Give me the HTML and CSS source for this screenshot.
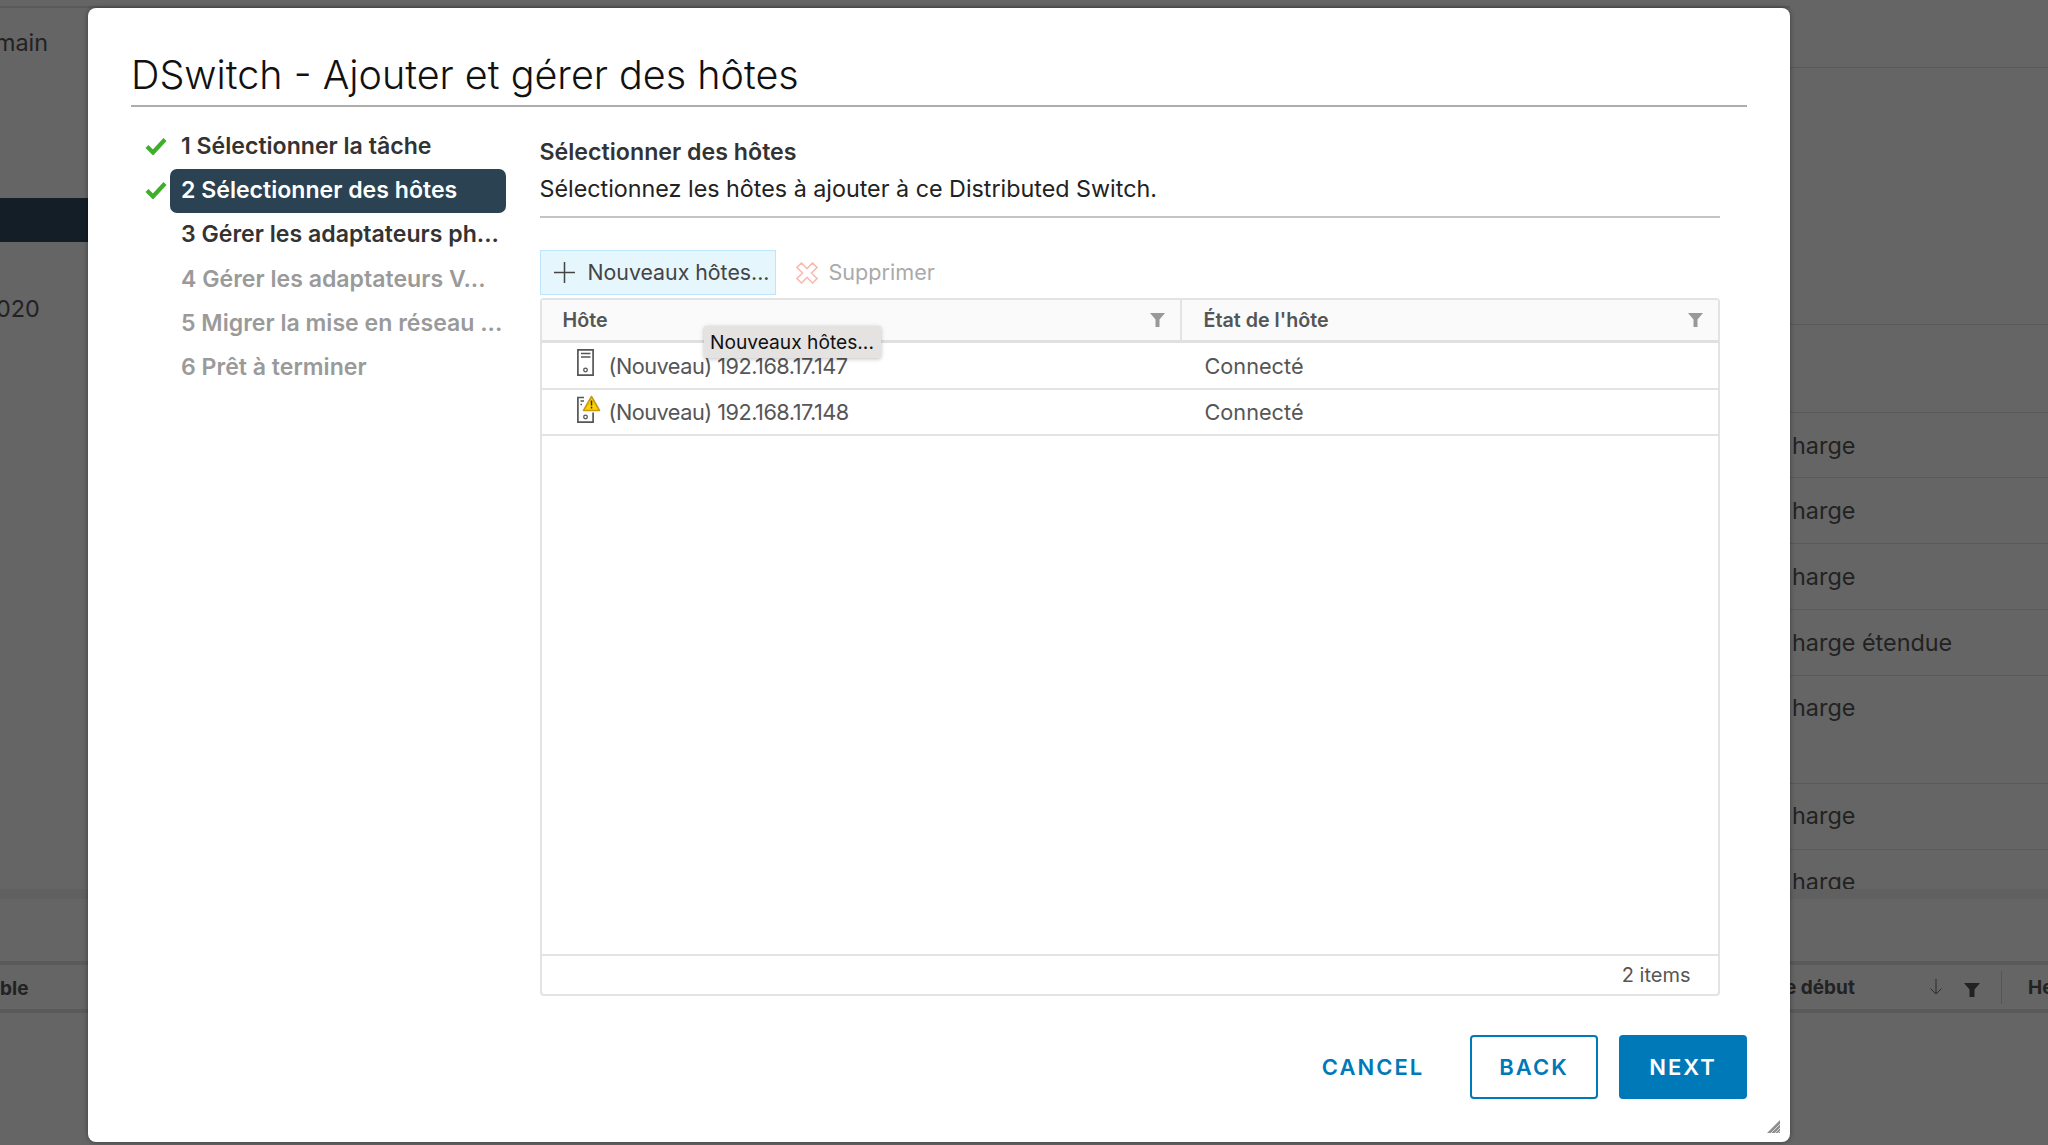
FILE: index.html
```html
<!DOCTYPE html>
<html lang="fr">
<head>
<meta charset="utf-8">
<title>DSwitch - Ajouter et gérer des hôtes</title>
<link rel="stylesheet" href="styles.css">
</head>
<body>
<div class="backdrop">
  <div class="bg-left">
    <div class="bgl-top"></div>
    <div class="bgl-main">main</div>
    <div class="bgl-dark"></div>
    <div class="bgl-date">020</div>
    <div class="bgl-grow"></div>
    <div class="bgl-band"></div>
    <div class="bgl-head">ble</div>
  </div>
  <div class="bg-mid"></div>
  <div class="bg-right">
    <div class="bgr-top"></div>
    <div class="bgr-blank"></div>
    <div class="bgr-blank2"></div>
    <div class="bgr-row bgr-first">harge</div>
    <div class="bgr-row">harge</div>
    <div class="bgr-row">harge</div>
    <div class="bgr-row">harge étendue</div>
    <div class="bgr-row bgr-tight bgr-tall">harge</div>
    <div class="bgr-row bgr-tight">harge</div>
    <div class="bgr-row bgr-tight bgr-last">harge</div>
    <div class="bgr-band"></div>
    <div class="bgr-head">
      <span class="bgr-deb">e début</span>
      <svg class="bgr-arrow" width="14" height="18" viewBox="0 0 14 18"><path d="M7 1v15M1.500 10.500 7 16l5.500-5.500" fill="none" stroke="#2b2b2b" stroke-width="1"/></svg>
      <svg class="bgr-filter" width="16" height="16" viewBox="0 0 16 16"><path d="M0 1h16l-5.500 6.500V15h-5V7.500z" fill="#222"/></svg>
      <span class="bgr-sep"></span>
      <span class="bgr-he">He</span>
    </div>
  </div>
</div>

<div class="modal">
  <h1 class="title">DSwitch - Ajouter et gérer des hôtes</h1>
  <div class="content">
    <ol class="steps">
      <li class="step done"><svg class="check" width="22" height="18" viewBox="0 0 22 18"><path d="M2 9.500l6 6L20 2.500" fill="none" stroke="#3fae2a" stroke-width="4.200"/></svg><span class="step-label">1 Sélectionner la tâche</span></li>
      <li class="step done active"><svg class="check" width="22" height="18" viewBox="0 0 22 18"><path d="M2 9.500l6 6L20 2.500" fill="none" stroke="#3fae2a" stroke-width="4.200"/></svg><span class="step-label">2 Sélectionner des hôtes</span></li>
      <li class="step"><span class="step-label">3 Gérer les adaptateurs ph...</span></li>
      <li class="step off"><span class="step-label">4 Gérer les adaptateurs V...</span></li>
      <li class="step off"><span class="step-label">5 Migrer la mise en réseau ...</span></li>
      <li class="step off"><span class="step-label">6 Prêt à terminer</span></li>
    </ol>
    <div class="panel">
      <h2 class="panel-title">Sélectionner des hôtes</h2>
      <p class="panel-desc">Sélectionnez les hôtes à ajouter à ce Distributed Switch.</p>
      <div class="toolbar">
        <button class="tool tool-add"><svg width="21" height="21" viewBox="0 0 21 21"><path d="M10.500 0v21M0 10.500h21" stroke="#444" stroke-width="1.500" fill="none"/></svg>Nouveaux hôtes...</button>
        <button class="tool tool-del"><svg width="22" height="22" viewBox="0 0 22 22"><path d="M5.500 1 11 6.500 16.500 1 21 5.500 15.500 11 21 16.500 16.500 21 11 15.500 5.500 21 1 16.500 6.500 11 1 5.500z" fill="none" stroke="#f9bbb0" stroke-width="1.600"/></svg>Supprimer</button>
      </div>
      <div class="grid">
        <div class="grid-head">
          <div class="th th-host">Hôte<svg class="funnel" width="15" height="14" viewBox="0 0 15 14"><path d="M0 0h15L9.500 6.500V14h-4V6.500z" fill="#999"/></svg></div>
          <div class="th th-state">État de l'hôte<svg class="funnel" width="15" height="14" viewBox="0 0 15 14"><path d="M0 0h15L9.500 6.500V14h-4V6.500z" fill="#999"/></svg></div>
        </div>
        <div class="grid-row grid-row-first">
          <div class="td td-host"><svg class="host" width="30" height="30" viewBox="0 0 30 30"><path d="M6.900 1.900h15.200v25.200H6.900z" fill="none" stroke="#555" stroke-width="1.700"/><path d="M10 5.500h9.500M10 9h9.500" stroke="#555" stroke-width="1.500"/><circle cx="14.500" cy="22" r="1.800" fill="none" stroke="#555" stroke-width="1.300"/></svg>(Nouveau) 192.168.17.147</div>
          <div class="td">Connecté</div>
        </div>
        <div class="grid-row">
          <div class="td td-host"><svg class="host" width="30" height="30" viewBox="0 0 30 30"><path d="M13 2.500H6.900v24.700h15.200V17.500" fill="none" stroke="#555" stroke-width="1.700"/><path d="M9.500 6h3.500M9.500 9.500h1.500" stroke="#555" stroke-width="1.500"/><circle cx="14.500" cy="22" r="1.800" fill="none" stroke="#555" stroke-width="1.300"/><path d="M20.500 1.500 28.500 15.500H12.500z" fill="#fdd008" stroke="#c99a10" stroke-width="1.600" stroke-linejoin="round"/><path d="M20.500 5.500v5M20.500 11.700v1.700" stroke="#333" stroke-width="1.500"/></svg>(Nouveau) 192.168.17.148</div>
          <div class="td">Connecté</div>
        </div>
        <div class="grid-body"></div>
        <div class="grid-foot">2 items</div>
      </div>
    </div>
  </div>
  <div class="actions">
    <button class="btn btn-link">CANCEL</button>
    <button class="btn btn-outline">BACK</button>
    <button class="btn btn-solid">NEXT</button>
  </div>
  <svg class="grip" width="13" height="13" viewBox="0 0 13 13"><path d="M13 0 0 13h13z" fill="#8e8e8e"/><path d="M13 4 4 13M13 8l-5 5M13 11l-2 2" stroke="#d8d8d8" stroke-width="1"/></svg>
  <div class="tooltip">Nouveaux hôtes...</div>
</div>
</body>
</html>
```
FILE: styles.css
```css
* { box-sizing: border-box; }
html, body { margin: 0; height: 100%; }
body { width: 2048px; height: 1145px; overflow: hidden; position: relative; background: #656565; font-family: "Inter", "Liberation Sans", sans-serif; color: #565656; }
.backdrop { display: flex; height: 1145px; color: #222; font-size: 23.4px; overflow: hidden; }
.bg-left { width: 88px; flex: none; display: flex; flex-direction: column; overflow: hidden; }
.bg-mid { flex: 1; height: 8px; border-bottom: 2px solid #5a5a5a; }
.bg-right { width: 258px; flex: none; display: flex; flex-direction: column; overflow: hidden; }
.bgl-top { height: 8px; flex: none; border-bottom: 2px solid #5a5a5a; }
.bgl-main { height: 190px; flex: none; padding-top: 20px; margin-left: -5px; }
.bgl-dark { height: 44px; flex: none; background: #131e27; }
.bgl-date { height: 106px; flex: none; padding-top: 52px; margin-left: -4px; }
.bgl-grow { height: 541px; flex: none; }
.bgl-band { height: 10px; flex: none; background: #606060; }
.bgl-head { height: 52px; flex: none; margin-top: 62px; padding-top: 12px; border-top: 4px solid #5a5a5a; border-bottom: 4px solid #5a5a5a; font-size: 19px; font-weight: 700; }
.bgr-top { height: 68px; flex: none; border-bottom: 1px solid #585858; }
.bgr-blank { height: 257px; flex: none; border-bottom: 1px solid #585858; }
.bgr-blank2 { height: 88px; flex: none; border-bottom: 1px solid #585858; }
.bgr-row { height: 66px; flex: none; padding: 18px 0 0 2px; border-bottom: 1px solid #5a5a5a; white-space: nowrap; }
.bgr-first { height: 65px; }
.bgr-tight { padding-top: 17px; }
.bgr-tall { height: 108px; }
.bgr-last { height: 39px; border-bottom: 0; }
.bgr-band { height: 10px; flex: none; background: #606060; }
.bgr-head { height: 52px; flex: none; margin-top: 62px; display: flex; align-items: center; border-top: 4px solid #5a5a5a; border-bottom: 4px solid #5a5a5a; font-size: 19px; font-weight: 700; white-space: nowrap; }
.bgr-deb { margin-left: -5px; width: 144px; flex: none; }
.bgr-arrow { flex: none; }
.bgr-filter { flex: none; margin: 6px 0 0 21px; }
.bgr-sep { flex: none; width: 1px; height: 33px; background: #555; margin-left: 21px; }
.bgr-he { margin-left: 26px; }

.modal { position: absolute; left: 88px; top: 8px; width: 1702px; height: 1134px; background: #fff; border-radius: 8px; box-shadow: 0 0 5px rgba(0,0,0,.4); padding: 41px 43px 0; display: flex; flex-direction: column; }
.title { margin: 0; height: 58px; flex: none; font-size: 39.500px; font-weight: 300; line-height: 52px; color: #111; border-bottom: 2px solid #adadad; white-space: nowrap; }
.content { display: flex; height: 910px; flex: none; }
.steps { list-style: none; margin: 18px 0 0; padding: 0; width: 408.500px; flex: none; }
.step { display: flex; align-items: center; height: 44.200px; position: relative; font-size: 23.100px; font-weight: 600; color: #333; padding-left: 39px; white-space: nowrap; }
.step-label { display: flex; align-items: center; height: 44px; width: 336px; padding: 0 0 2px 11px; border-radius: 7px; }
.active .step-label { background: #2b4252; color: #fff; }
.off { color: #9a9a9a; }
.check { position: absolute; left: 14px; top: 12px; }
.panel { width: 1180px; flex: none; }
.panel-title { margin: 30px 0 0; font-size: 23.200px; font-weight: 600; line-height: 30px; color: #333; }
.panel-desc { margin: 7px 0 0; height: 44px; font-size: 23.300px; line-height: 30px; color: #222; border-bottom: 2px solid #c4c4c4; white-space: nowrap; }
.toolbar { display: flex; margin-top: 32px; gap: 9px; }
.tool { display: flex; align-items: center; height: 45px; border: 1px solid #bde6fb; background: #e6f6fd; font: inherit; font-size: 21.300px; color: #444; padding: 0 6px 2px 13px; gap: 13px; white-space: nowrap; }
.tool svg { margin-top: 2px; }
.tool-del { background: none; border-color: transparent; color: #aaa; padding-left: 10px; gap: 10px; font-size: 21.600px; }
.grid { height: 698px; margin-top: 3px; border: 2px solid #e3e3e3; border-radius: 4px; display: flex; flex-direction: column; }
.grid-head { display: flex; height: 43px; background: #fafafa; border-bottom: 3px solid #e0e0e0; flex: none; font-size: 19.700px; font-weight: 600; color: #555; }
.th { display: flex; align-items: center; justify-content: space-between; padding: 0 15px 0 21px; }
.th-host { width: 640px; border-right: 2px solid #e3e3e3; }
.th-state { flex: 1; padding-left: 22px; }
.grid-row { display: flex; align-items: center; height: 46px; flex: none; border-bottom: 2px solid #e3e3e3; font-size: 21.700px; color: #565656; }
.grid-row-first { height: 47px; }
.td-host { display: flex; align-items: center; width: 663px; padding-left: 29px; gap: 8px; letter-spacing: -0.5px; white-space: nowrap; }
.td-host .host { margin-top: -5px; flex: none; }
.grid-body { flex: 1; }
.grid-foot { height: 40px; flex: none; border-top: 2px solid #e3e3e3; display: flex; align-items: center; justify-content: flex-end; padding-right: 27px; font-size: 20px; color: #565656; }
.actions { display: flex; justify-content: flex-end; align-items: center; margin-top: 18px; }
.btn { height: 64px; font: inherit; font-size: 22px; font-weight: 600; letter-spacing: 2px; border-radius: 4px; border: 2px solid #0079b8; color: #0079b8; background: #fff; }
.btn-link { border-color: transparent; width: 130px; margin-right: 32px; padding: 0; }
.btn-outline { width: 128px; margin-right: 21px; }
.btn-solid { width: 128px; background: #0079b8; color: #fff; }
.grip { position: absolute; right: 10px; bottom: 9px; }
.tooltip { position: absolute; left: 616px; top: 318px; width: 177px; height: 32px; padding: 0 6px; display: flex; align-items: center; background: #e5e3e1; border-radius: 2px; box-shadow: 0 1px 4px rgba(0,0,0,.25); font-size: 19.200px; color: #111; white-space: nowrap; }
```
